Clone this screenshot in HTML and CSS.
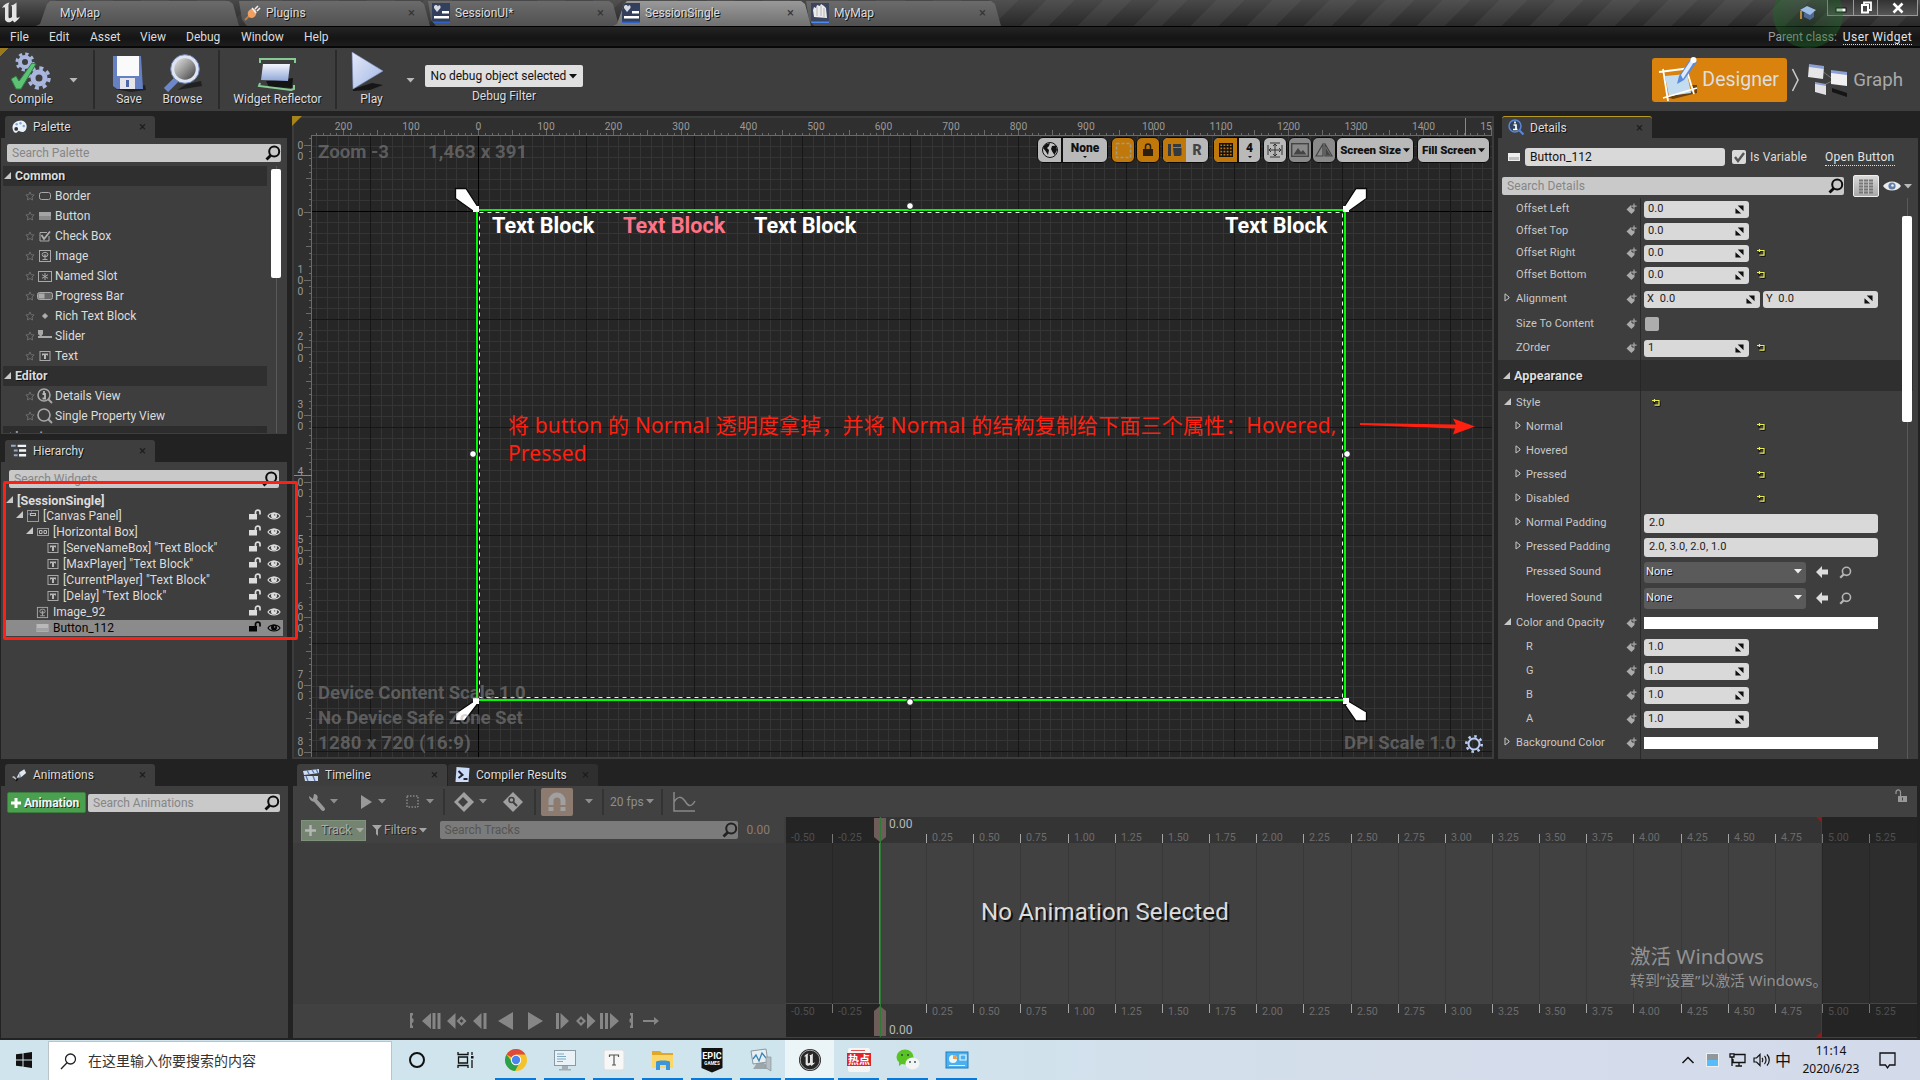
FILE: index.html
```html
<!DOCTYPE html>
<html lang="zh-CN">
<head>
<meta charset="utf-8">
<title>SessionSingle</title>
<link rel="stylesheet" href="styles.css">
</head>
<body>
<svg class="defs" width="0" height="0">
  <defs>
    <linearGradient id="g-blue" x1="0" y1="0" x2="0" y2="1"><stop offset="0" stop-color="#f2f5fc"/><stop offset="1" stop-color="#8fa6d8"/></linearGradient>
    <linearGradient id="g-lens" x1="0" y1="0" x2="1" y2="1"><stop offset="0" stop-color="#f4f4f4"/><stop offset=".55" stop-color="#8c8c8c"/><stop offset="1" stop-color="#2c2c2c"/></linearGradient>
    <linearGradient id="g-play" x1="0" y1="0" x2="1" y2="1"><stop offset="0" stop-color="#e6e9f8"/><stop offset="1" stop-color="#9fb6e6"/></linearGradient>
  </defs>
  <symbol id="search" viewBox="0 0 16 16"><circle cx="9.2" cy="6.6" r="5" fill="none" stroke="currentColor" stroke-width="2"/><path d="M5.6 10.4 1.5 14.5" stroke="currentColor" stroke-width="2.8"/></symbol>
  <symbol id="star" viewBox="0 0 10 10"><path d="M5 .9 6.2 3.7 9.2 4 7 6 7.6 9 5 7.5 2.4 9 3 6 .8 4 3.8 3.7Z" fill="none" stroke="#6c6c6c"/></symbol>
  <symbol id="open" viewBox="0 0 8 8"><path d="M8 0V8H0Z" fill="#c8c8c8"/></symbol>
  <symbol id="closed" viewBox="0 0 6 9"><path d="M1 .8V8L5 5V4Z" fill="none" stroke="#c8c8c8"/></symbol>
  <symbol id="down" viewBox="0 0 8 5"><path d="M0 0H8L4 4.6Z" fill="currentColor"/></symbol>
  <symbol id="spin" viewBox="0 0 10 10"><path d="M3 .5H9.500V7ZM.5 3.500V9.500H7Z" fill="#111"/><path d="M.5 1.200 9.300 9.500" stroke="#d9d9d9" stroke-width="2"/></symbol>
  <symbol id="reset" viewBox="0 0 9 8"><path d="M3 1 .8 3 3 5M1 3H3M2 1.5H7.5V6.5H3V5" fill="none" stroke="#111" transform="translate(.6 .8)"/><path d="M2.5 0V3M0 1.5H7V6.2H2.5" fill="none" stroke="#e8ec4c" stroke-width="1.2"/></symbol>
  <symbol id="tag" viewBox="0 0 12 12"><path d="M.5 6.5 5 2 8.5 6.2V8L5.4 11Z" fill="#aaa"/><path d="M8 .5V6M5.3 3.2H10.8" stroke="#3e3e3e" stroke-width="3"/><path d="M8 .6V5.8M5.4 3.2H10.6" stroke="#a5a5a5" stroke-width="1.2"/></symbol>
  <symbol id="ic-text" viewBox="0 0 12 12"><rect x="1" y="1.5" width="10" height="9" fill="none" stroke="#a8a8a8"/><path d="M3 3.5H9V5.6H8L7.6 5H7V9H5V5H4.4L4 5.6H3Z" fill="#b8b8b8"/></symbol>
  <symbol id="ic-image" viewBox="0 0 14 14"><rect x="1.5" y="1.5" width="11" height="11" fill="none" stroke="#a8a8a8"/><ellipse cx="7" cy="5.6" rx="2.9" ry="2.2" fill="none" stroke="#a8a8a8"/><path d="M7 5V10.5M4.5 10.5H9.5M5.6 6.3 7 7.5 8.4 6.3" stroke="#a8a8a8" fill="none"/></symbol>
  <symbol id="ic-button" viewBox="0 0 14 10"><path d="M1 1H13V5H1Z" fill="#a4a4a4"/><path d="M1 5H13V9H1Z" fill="#8a8a8a"/></symbol>
  <symbol id="unlock" viewBox="0 0 12 11"><path d="M0 5H8V10.5H0Z" fill="currentColor"/><path d="M6.5 5V3C6.5 .5 11 .5 11 3V5.5" fill="none" stroke="currentColor" stroke-width="1.7"/></symbol>
  <symbol id="eye" viewBox="0 0 14 10"><path d="M1 5C3.5 1 10.500 1 13 5 10.500 9 3.5 9 1 5Z" fill="none" stroke="currentColor" stroke-width="1.2"/><circle cx="7" cy="4.6" r="3" fill="currentColor"/><circle cx="7.6" cy="3.9" r=".8" fill="#777"/></symbol>
  <symbol id="widget" viewBox="0 0 18 20"><rect width="18" height="20" fill="#32405e"/><rect y="18.5" width="18" height="1.500" fill="#2f62c9"/><path d="M6 3.500C4.500 1 1.500 2 2 5L5 9 8.500 5C9 2 7 1.500 6 3.500Z" fill="#d9dbe2"/><path d="M10 8H17V10.500H10ZM2 13H17V15.500H2Z" fill="#fff"/></symbol>
  <symbol id="ue" viewBox="0 0 22 24"><path d="M1 7C3 3 6 2 8.500 1.500 7 3.500 7.500 5 7.500 6V16C7.500 17.500 9.500 17.500 11 16V5.500L10 4.500C12 4 14 3 15.500 1.500V15.500C15.500 17.500 17 17 19 15.500 17.500 19 15 20 13.500 21.500L11.500 19.500C9.500 21.500 7.500 22 5.500 20.500 3.500 19 4 18 4 16V7.500C4 5.500 2.500 6 1 7Z" fill="#e4e4e4"/></symbol>
</svg>

<header class="titlebar">
  <div class="ue-logo"><svg width="24" height="24"><use href="#ue"/></svg></div>
  <div class="wtab first"><span>MyMap</span></div>
  <div class="wtab"><svg width="18" height="18" viewBox="0 0 18 18"><path d="M2 16 6 12" stroke="#c77c3a" stroke-width="2"/><path d="M5 8C7 4 11 4 13 6 14 9 13 13 9 14 6 14 4 12 5 8Z" fill="#f0a060"/><path d="M9 4 13 9M12 5 15 2M14 7 17 4" stroke="#eee" stroke-width="1.600"/></svg><span>Plugins</span><i>×</i></div>
  <div class="wtab"><svg width="18" height="20"><use href="#widget"/></svg><span>SessionUI*</span><i>×</i></div>
  <div class="wtab active"><svg width="18" height="20"><use href="#widget"/></svg><span>SessionSingle</span><i>×</i></div>
  <div class="wtab"><svg width="18" height="20" viewBox="0 0 18 20"><rect width="18" height="20" fill="#3a4560"/><rect y="18.500" width="18" height="1.500" fill="#4d87f0"/><path d="M2 7 3 4 5 5 6 2 9 3 10 1 13 3 15 5 16 15 3 14Z" fill="#ebebeb"/><path d="M6 4V13M10 3V13M13 5V14" stroke="#b5b5b5"/></svg><span>MyMap</span><i>×</i></div>
  <div class="tutorial"><svg width="18" height="18" viewBox="0 0 18 18"><path d="M5 8V12L11 15 15 12V7Z" fill="#4e6a94"/><path d="M1 5 8 1 17 5 11 10Z" fill="#9dbde8"/><path d="M2 6V14" stroke="#e0a34a" stroke-width="1.500"/></svg></div>
  <div class="winbtns">
    <b><svg width="12" height="10"><rect x="1" y="5" width="10" height="4" fill="#fff" stroke="#111"/></svg></b>
    <b><svg width="14" height="14" viewBox="0 0 14 14"><path d="M5 3V1.500H12V9H10" fill="none" stroke="#fff" stroke-width="1.800"/><rect x="3" y="4" width="6" height="7.500" fill="none" stroke="#fff" stroke-width="2"/></svg></b>
    <b><svg width="12" height="12" viewBox="0 0 12 12"><path d="M1.500 1.500 10.500 10.500M10.500 1.500 1.500 10.500" stroke="#fff" stroke-width="2.600"/></svg></b>
  </div>
</header>

<nav class="menubar">
  <span class="m-file">File</span><span class="m-edit">Edit</span><span class="m-asset">Asset</span><span class="m-view">View</span><span class="m-debug">Debug</span><span class="m-window">Window</span><span class="m-help">Help</span>
  <div class="parent">Parent class: <u>User Widget</u></div>
</nav>

<section class="toolbar">
  <div class="tool compile"><svg width="40" height="40" viewBox="0 0 40 40"><g fill="none" stroke="#a9b6de"><circle cx="14" cy="10" r="5" stroke-width="4"/><circle cx="14" cy="10" r="8" stroke-width="3" stroke-dasharray="3.200 3.080"/><circle cx="28" cy="26" r="6" stroke-width="5"/><circle cx="28" cy="26" r="10" stroke-width="3.500" stroke-dasharray="4 3.850"/></g><path d="M0 27 5 24 8 29 21 11 25 12 10 37 5 37Z" fill="#5dc274" stroke="#2f7a43"/></svg><span>Compile</span></div>
  <svg class="arrow a1" width="9" height="5"><use href="#down"/></svg>
  <div class="tool save"><svg width="36" height="38" viewBox="0 0 36 38"><path d="M4 35 34 31 35 36 20 38Z" fill="#151515" opacity=".7"/><path d="M2 2H30L32 35H6L2 32Z" fill="#6680c4"/><path d="M6 2H28V22H6Z" fill="#fafafa"/><path d="M9 24H24V35H9Z" fill="#e5e5ea"/><path d="M15 26H18V33H15Z" fill="#4e68a8"/></svg><span>Save</span></div>
  <div class="tool browse"><svg width="40" height="38" viewBox="0 0 40 38"><path d="M24 30 38 27 39 32 14 36Z" fill="#151515" opacity=".7"/><path d="M14 25 3 36" stroke="#6c88c8" stroke-width="6"/><circle cx="22" cy="15" r="12.500" fill="url(#g-lens)" stroke="#dfe4f2" stroke-width="3.500"/><circle cx="22" cy="15" r="14.300" fill="none" stroke="#7088bd"/></svg><span>Browse</span></div>
  <div class="tool reflector"><svg width="42" height="36" viewBox="0 0 42 36"><path d="M9 25 36 22 35 32 12 31Z" fill="#141414"/><path d="M3 7V3H38V7M3 27 2 30 34 34 37 33V29" fill="none" stroke="#86cb94" stroke-width="2"/><path d="M6 8H33L31 25 4 24Z" fill="url(#g-blue)"/></svg><span>Widget Reflector</span></div>
  <div class="tool play"><svg width="36" height="40" viewBox="0 0 36 40"><path d="M3 37 22 31 33 33 20 38 3 39Z" fill="#161616"/><path d="M2 0 33 19 3 37Z" fill="url(#g-play)" stroke="#7c8fc0" stroke-width=".6"/></svg><span>Play</span></div>
  <svg class="arrow a2" width="9" height="5"><use href="#down"/></svg>
  <div class="filter"><div class="combo">No debug object selected<svg width="8" height="5"><use href="#down"/></svg></div><span>Debug Filter</span></div>
  <div class="modes">
    <div class="designer"><svg width="42" height="50" viewBox="0 0 42 50"><path d="M10 42 38 36 34 30 40 30 40 38 16 44Z" fill="#6b420b"/><path d="M8 21 30 19 34 38 12 41Z" fill="#c4dcf0"/><path d="M2 17 34 13M6 14 11 46M6 43 40 33M29 13 37 39" stroke="#fff" stroke-width="1.800"/><path d="M20 29 22 21 34 3 40 7 27 25Z" fill="#5b8bdb"/><path d="M24 20 34 5 37 7 26 24Z" fill="#dfe9fa"/><circle cx="36.500" cy="5" r="3" fill="#fff"/></svg><span>Designer</span></div>
    <svg class="chev" width="9" height="24" viewBox="0 0 9 24"><path d="M1.500 1 7 12 1.500 23" fill="none" stroke="#c9c9c9" stroke-width="1.600"/></svg>
    <svg width="40" height="36" viewBox="0 0 40 36"><path d="M24 26 39 31 39 35 24 30Z" fill="#151515"/><path d="M14 9 26 18 14 24" stroke="#777" fill="none"/><path d="M1 3 16 5 15 17 0 15Z" fill="#e6e6e8"/><path d="M1 2 16 4V7L1 5Z" fill="#8ba1d4"/><path d="M23 9 39 11V24L23 22Z" fill="#f1f1f1"/><path d="M23 8 39 10V13L23 11Z" fill="#8ba1d4"/><path d="M7 21 18 23V33L7 30Z" fill="#e0e0e3"/><path d="M7 20 18 22V24L7 22Z" fill="#8ba1d4"/></svg>
    <span class="graph">Graph</span>
  </div>
</section>

<main class="work">
  <aside class="left">
    <div class="tab"><svg width="18" height="16" viewBox="0 0 18 16"><path d="M2 11C0 4 6 1 11 1 17 2 18 8 15 12 12 15 9 12 8 12 6 15 3 15 2 11Z" fill="#e9f2fb"/><circle cx="5.500" cy="10" r="2" fill="#333"/><circle cx="6" cy="5" r="1.300" fill="#7fa8d9"/><circle cx="10" cy="4" r="1.300" fill="#7fa8d9"/><circle cx="13.500" cy="7" r="1.300" fill="#7fa8d9"/></svg><span>Palette</span><i>×</i></div>
    <div class="panel palette">
      <div class="search"><span>Search Palette</span><svg width="16" height="16"><use href="#search"/></svg></div>
      <div class="plist">
        <div class="rows">
          <h4><svg width="7" height="7"><use href="#open"/></svg>Common</h4>
          <p><svg width="10" height="10"><use href="#star"/></svg><svg width="16" height="16" viewBox="0 0 16 16"><rect x="2.500" y="4.500" width="11" height="7" rx="2" fill="none" stroke="#a8a8a8"/></svg>Border</p>
          <p><svg width="10" height="10"><use href="#star"/></svg><svg width="16" height="16" viewBox="-1 -3 16 16"><use href="#ic-button" width="14" height="10"/></svg>Button</p>
          <p><svg width="10" height="10"><use href="#star"/></svg><svg width="16" height="16" viewBox="0 0 16 16"><path d="M10 4.500H3V13H12V8" fill="none" stroke="#a8a8a8"/><path d="M4.500 7 7 11 13 3.500" fill="none" stroke="#b0b0b0" stroke-width="1.800"/></svg>Check Box</p>
          <p><svg width="10" height="10"><use href="#star"/></svg><svg width="16" height="16" viewBox="-1 -1 16 16"><use href="#ic-image" width="14" height="14"/></svg>Image</p>
          <p><svg width="10" height="10"><use href="#star"/></svg><svg width="16" height="16" viewBox="0 0 16 16"><rect x="1.500" y="3.500" width="13" height="10" fill="none" stroke="#a8a8a8"/><path d="M8 5V12M5 6.700 11 10.300M11 6.700 5 10.300" stroke="#a8a8a8"/></svg>Named Slot</p>
          <p><svg width="10" height="10"><use href="#star"/></svg><svg width="16" height="16" viewBox="0 0 16 16"><rect x=".5" y="4.500" width="15" height="7" rx="2" fill="#666" stroke="#a8a8a8"/><rect x="1.500" y="5.500" width="6" height="5" fill="#aaa"/></svg>Progress Bar</p>
          <p><svg width="10" height="10"><use href="#star"/></svg><svg width="16" height="16" viewBox="0 0 16 16"><path d="M8 5.500 10.500 8 8 10.500 5.500 8Z" fill="#b0b0b0" stroke="#b0b0b0" stroke-linejoin="round"/></svg>Rich Text Block</p>
          <p><svg width="10" height="10"><use href="#star"/></svg><svg width="16" height="16" viewBox="0 0 16 16"><path d="M1 2H6V6L4.500 8H15V10H1V8H3L1 6Z" fill="#a8a8a8"/></svg>Slider</p>
          <p><svg width="10" height="10"><use href="#star"/></svg><svg width="16" height="16" viewBox="-2 -2 16 16"><use href="#ic-text" width="12" height="12"/></svg>Text</p>
          <h4><svg width="7" height="7"><use href="#open"/></svg>Editor</h4>
          <p><svg width="10" height="10"><use href="#star"/></svg><svg width="16" height="16" viewBox="0 0 16 16"><circle cx="7" cy="7" r="6" fill="none" stroke="#a8a8a8" stroke-width="1.600"/><path d="M11 11 15 15" stroke="#a8a8a8" stroke-width="2"/><path d="M5.500 6H8V10.500M5.500 10.500H9M7 3V5" stroke="#b8b8b8" stroke-width="1.800" fill="none"/></svg>Details View</p>
          <p><svg width="10" height="10"><use href="#star"/></svg><svg width="16" height="16" viewBox="0 0 16 16"><circle cx="7" cy="7" r="6" fill="none" stroke="#a8a8a8" stroke-width="1.600"/><path d="M11 11 15 15" stroke="#a8a8a8" stroke-width="2"/></svg>Single Property View</p>
          <h4 class="cut"><svg width="7" height="7"><use href="#open"/></svg>Input</h4>
        </div>
        <div class="track"><div class="thumb"></div></div>
      </div>
    </div>
    <div class="tab"><svg width="18" height="14" viewBox="0 0 18 14"><path d="M0 1.500H5M3 6.500H7M3 11.500H7" stroke="#9aaac8" stroke-width="2"/><path d="M7 1.500H16M8.500 6.500H16M8.500 11.500H16" stroke="#f0f3f8" stroke-width="2.500"/></svg><span>Hierarchy</span><i>×</i></div>
    <div class="panel hierarchy">
      <div class="search"><span>Search Widgets</span><svg width="16" height="16"><use href="#search"/></svg></div>
      <div class="tree">
        <div class="n n0"><svg class="tw" width="7" height="7"><use href="#open"/></svg><b>[SessionSingle]</b></div>
        <div class="n n1"><svg class="tw" width="7" height="7"><use href="#open"/></svg><svg width="12" height="12" viewBox="0 0 12 12"><rect x=".5" y=".5" width="11" height="11" fill="none" stroke="#999"/><path d="M1 4H3M4.500 1V2.500" stroke="#3f8fe0"/><rect x="3.500" y="3.500" width="5" height="2" fill="none" stroke="#bbb"/></svg><span>[Canvas Panel]</span><svg class="lk" width="12" height="11"><use href="#unlock"/></svg><svg class="ey" width="14" height="10"><use href="#eye"/></svg></div>
        <div class="n n2"><svg class="tw" width="7" height="7"><use href="#open"/></svg><svg width="12" height="12" viewBox="0 0 12 12"><rect x=".5" y="2.500" width="11" height="7" fill="none" stroke="#999"/><path d="M2.500 4.500H5V7.500H2.500ZM7 4.500H9.500V7.500H7Z" fill="none" stroke="#bbb"/></svg><span>[Horizontal Box]</span><svg class="lk" width="12" height="11"><use href="#unlock"/></svg><svg class="ey" width="14" height="10"><use href="#eye"/></svg></div>
        <div class="n n3"><svg width="12" height="12"><use href="#ic-text"/></svg><span>[ServeNameBox] "Text Block"</span><svg class="lk" width="12" height="11"><use href="#unlock"/></svg><svg class="ey" width="14" height="10"><use href="#eye"/></svg></div>
        <div class="n n3"><svg width="12" height="12"><use href="#ic-text"/></svg><span class="sp">[MaxPlayer] "Text Block"</span><svg class="lk" width="12" height="11"><use href="#unlock"/></svg><svg class="ey" width="14" height="10"><use href="#eye"/></svg></div>
        <div class="n n3"><svg width="12" height="12"><use href="#ic-text"/></svg><span class="sp">[CurrentPlayer] "Text Block"</span><svg class="lk" width="12" height="11"><use href="#unlock"/></svg><svg class="ey" width="14" height="10"><use href="#eye"/></svg></div>
        <div class="n n3"><svg width="12" height="12"><use href="#ic-text"/></svg><span class="sp">[Delay] "Text Block"</span><svg class="lk" width="12" height="11"><use href="#unlock"/></svg><svg class="ey" width="14" height="10"><use href="#eye"/></svg></div>
        <div class="n n4"><svg width="13" height="13"><use href="#ic-image"/></svg><span>Image_92</span><svg class="lk" width="12" height="11"><use href="#unlock"/></svg><svg class="ey" width="14" height="10"><use href="#eye"/></svg></div>
        <div class="n n4 sel"><svg width="13" height="10" viewBox="0 0 13 10"><rect x=".5" y="1" width="12" height="8" fill="#b9b9b9"/><path d="M1 5H12V8.500H1Z" fill="#a2a2a2"/></svg><span>Button_112</span><svg class="lk" width="12" height="11"><use href="#unlock"/></svg><svg class="ey" width="14" height="10"><use href="#eye"/></svg></div>
      </div>
    </div>
  </aside>

  <section class="viewport">
    <svg id="canvas" width="1202" height="643" viewBox="292 116 1202 643"></svg>
    <span class="hud zoom">Zoom -3</span><span class="hud pos">1,463 x 391</span>
    <div class="hud info"><div>Device Content Scale 1.0</div><div>No Device Safe Zone Set</div><div>1280 x 720 (16:9)</div></div>
    <div class="hud dpi">DPI Scale 1.0<svg width="18" height="20" viewBox="0 0 18 20"><circle cx="9" cy="10" r="5.500" fill="none" stroke="#b9cdf3" stroke-width="2"/><circle cx="9" cy="10" r="7.700" fill="none" stroke="#b9cdf3" stroke-width="2.600" stroke-dasharray="2.500 3.548"/></svg></div>
    <div class="chips">
      <div class="chip"><b class="w24"><svg width="18" height="18" viewBox="0 0 18 18"><circle cx="9" cy="9" r="7.500" fill="#c4c4c4" stroke="#111"/><path d="M4 3.500 9 2 8 5 6 7 8 9 7 14 4.500 10 2 7ZM11 5 15 4.500 16 9 13.500 14 11.500 11 10 8Z" fill="#111"/></svg></b><b class="w45 none">None<em></em></b></div>
      <div class="chip or m3"><b class="w23"><svg width="17" height="17"><rect x="1.500" y="1.500" width="14" height="14" fill="none" stroke="#9d9d8d" stroke-width="1.500" stroke-dasharray="3 2"/></svg></b></div>
      <div class="chip or m1"><b class="w23"><svg width="12" height="14" viewBox="0 0 12 14"><path d="M1 6H11V13H1Z" fill="#2b2010"/><path d="M3.500 6V3.500C3.500 0 8.500 0 8.500 3.500V6" fill="none" stroke="#2b2010" stroke-width="1.500"/></svg></b></div>
      <div class="chip m2"><b class="w24 or"><svg width="16" height="14" viewBox="0 0 16 14"><path d="M1 1H4V13H1ZM6 1 14 1V4H6ZM6 5H14.500V12L13 13H7Z" fill="#333a40"/></svg></b><b class="w23 r">R</b></div>
      <div class="chip m4"><b class="w24 or"><svg width="14" height="14" viewBox="0 0 14 14"><path d="M.7.7H13.300V13.300H.7ZM.7 3.800H13.300M.7 7H13.300M.7 10.200H13.300M3.800.7V13.300M7 .7V13.300M10.200.7V13.300" fill="none" stroke="#111" stroke-width="1.400"/></svg></b><b class="w24 none">4<em></em></b></div>
      <div class="chip m2"><b class="w23"><svg width="18" height="18" viewBox="0 0 18 18"><path d="M2 4V14M16 4V14M4 2H14M4 16H14M9 3V15M3 9H15M7 5 9 3 11 5M7 13 9 15 11 13M5 7 3 9 5 11M13 7 15 9 13 11" fill="none" stroke="#333"/></svg></b></div>
      <div class="chip m1 dim"><b class="w23"><svg width="18" height="14" viewBox="0 0 18 14"><rect x=".7" y=".7" width="16.600" height="12.600" fill="none" stroke="#444" stroke-width="1.400"/><path d="M2.500 11.500 7 5 10 9 12 7 15.500 11.500Z" fill="#444"/></svg></b></div>
      <div class="chip dim"><b class="w23"><svg width="18" height="14" viewBox="0 0 18 14"><path d="M8 1V13H1ZM10 1V13H17Z" fill="none" stroke="#444" stroke-width="1.200"/><path d="M11 5V12.500H15.500Z" fill="#444"/></svg></b></div>
      <div class="chip"><b class="w79">Screen Size<svg width="7" height="5"><use href="#down"/></svg></b></div>
      <div class="chip m3"><b class="w73">Fill Screen<svg width="7" height="5"><use href="#down"/></svg></b></div>
    </div>
    <span class="tb t1">Text Block</span><span class="tb t2">Text Block</span><span class="tb t3">Text Block</span><span class="tb t4">Text Block</span>
  </section>

  <aside class="right">
    <div class="tab dtab"><svg width="17" height="17" viewBox="0 0 17 17"><circle cx="7" cy="7" r="6" fill="#31435c" stroke="#5c86d6" stroke-width="1.500"/><path d="M11.500 11.500 15.500 15.500" stroke="#5c86d6" stroke-width="2.200"/><path d="M5.500 6H8V10.500M5 10.500H9.500M7 2.500V4.500" stroke="#fff" stroke-width="1.700" fill="none"/></svg><span>Details</span><i>×</i></div>
    <div class="panel details">
      <div class="name"><svg width="12" height="8"><rect width="12" height="8" fill="#efefef"/><rect x="1" y="4" width="10" height="3" fill="#c2c2c2"/></svg><div class="field">Button_112</div><div class="cb"><svg width="12" height="12" viewBox="0 0 12 12"><path d="M2 6 5 10 11 2" fill="none" stroke="#555" stroke-width="2.400"/></svg></div><span>Is Variable</span><u>Open Button</u></div>
      <div class="dsearch"><div class="search"><span>Search Details</span><svg width="16" height="16"><use href="#search"/></svg></div><div class="gridbtn"><svg width="14" height="15" viewBox="0 0 14 15"><path d="M0 1.500H14M0 4.500H14M0 7.500H14M0 10.500H14M0 13.500H14" stroke="#777" stroke-width="2"/><path d="M4.500 0V15M9.500 0V15" stroke="#c4c4c4"/></svg></div><svg class="eyeb" width="18" height="12" viewBox="0 0 18 12"><path d="M0 6C4 0 14 0 18 6 14 12 4 12 0 6Z" fill="#ececec"/><circle cx="9" cy="6" r="3.600" fill="#5f7ea8"/><circle cx="9.500" cy="5.500" r="1.300" fill="#eee"/></svg><svg class="arrow" width="8" height="5"><use href="#down"/></svg></div>
      <div class="props">
        <div class="list">
          <div class="row h22"><label>Offset Left<svg width="12" height="12"><use href="#tag"/></svg></label><div class="num">0.0<svg width="9" height="9"><use href="#spin"/></svg></div></div>
          <div class="row h22"><label>Offset Top<svg width="12" height="12"><use href="#tag"/></svg></label><div class="num">0.0<svg width="9" height="9"><use href="#spin"/></svg></div></div>
          <div class="row h22"><label>Offset Right<svg width="12" height="12"><use href="#tag"/></svg></label><div class="num">0.0<svg width="9" height="9"><use href="#spin"/></svg></div><svg class="rs" width="9" height="8"><use href="#reset"/></svg></div>
          <div class="row h22"><label>Offset Bottom<svg width="12" height="12"><use href="#tag"/></svg></label><div class="num">0.0<svg width="9" height="9"><use href="#spin"/></svg></div><svg class="rs" width="9" height="8"><use href="#reset"/></svg></div>
          <div class="row h26"><label><svg class="x1" width="6" height="9"><use href="#closed"/></svg>Alignment<svg width="12" height="12"><use href="#tag"/></svg></label><div class="num xy">X&nbsp; 0.0<svg width="9" height="9"><use href="#spin"/></svg></div><div class="num xy y">Y&nbsp; 0.0<svg width="9" height="9"><use href="#spin"/></svg></div></div>
          <div class="row h24"><label>Size To Content<svg width="12" height="12"><use href="#tag"/></svg></label><div class="cb off"></div></div>
          <div class="row h24"><label>ZOrder<svg width="12" height="12"><use href="#tag"/></svg></label><div class="num">1<svg width="9" height="9"><use href="#spin"/></svg></div><svg class="rs" width="9" height="8"><use href="#reset"/></svg></div>
          <div class="row cat"><label><svg class="x0" width="7" height="7"><use href="#open"/></svg>Appearance</label></div>
          <div class="row h24"><label><svg class="x1" width="7" height="7"><use href="#open"/></svg>Style</label><svg class="rs near" width="9" height="8"><use href="#reset"/></svg></div>
          <div class="row h24"><label class="in"><svg class="x2" width="6" height="9"><use href="#closed"/></svg>Normal</label><svg class="rs far" width="9" height="8"><use href="#reset"/></svg></div>
          <div class="row h24"><label class="in"><svg class="x2" width="6" height="9"><use href="#closed"/></svg>Hovered</label><svg class="rs far" width="9" height="8"><use href="#reset"/></svg></div>
          <div class="row h24"><label class="in"><svg class="x2" width="6" height="9"><use href="#closed"/></svg>Pressed</label><svg class="rs far" width="9" height="8"><use href="#reset"/></svg></div>
          <div class="row h24"><label class="in"><svg class="x2" width="6" height="9"><use href="#closed"/></svg>Disabled</label><svg class="rs far" width="9" height="8"><use href="#reset"/></svg></div>
          <div class="row h24"><label class="in"><svg class="x2" width="6" height="9"><use href="#closed"/></svg>Normal Padding</label><div class="num wide">2.0</div></div>
          <div class="row h24"><label class="in"><svg class="x2" width="6" height="9"><use href="#closed"/></svg>Pressed Padding</label><div class="num wide">2.0, 3.0, 2.0, 1.0</div></div>
          <div class="row h26"><label class="in">Pressed Sound</label><div class="drop">None<svg width="8" height="5"><use href="#down"/></svg></div><svg class="back" width="12" height="12" viewBox="0 0 12 12"><path d="M0 6 6 0V3.500H12V8.500H6V12Z" fill="#dcdcdc"/></svg><svg class="find" width="13" height="13"><use href="#search"/></svg></div>
          <div class="row h26"><label class="in">Hovered Sound</label><div class="drop">None<svg width="8" height="5"><use href="#down"/></svg></div><svg class="back" width="12" height="12" viewBox="0 0 12 12"><path d="M0 6 6 0V3.500H12V8.500H6V12Z" fill="#dcdcdc"/></svg><svg class="find" width="13" height="13"><use href="#search"/></svg></div>
          <div class="row h24"><label><svg class="x1" width="7" height="7"><use href="#open"/></svg>Color and Opacity<svg width="12" height="12"><use href="#tag"/></svg></label><div class="swatch"></div></div>
          <div class="row h24"><label class="in">R<svg width="12" height="12"><use href="#tag"/></svg></label><div class="num">1.0<svg width="9" height="9"><use href="#spin"/></svg></div></div>
          <div class="row h24"><label class="in">G<svg width="12" height="12"><use href="#tag"/></svg></label><div class="num">1.0<svg width="9" height="9"><use href="#spin"/></svg></div></div>
          <div class="row h24"><label class="in">B<svg width="12" height="12"><use href="#tag"/></svg></label><div class="num">1.0<svg width="9" height="9"><use href="#spin"/></svg></div></div>
          <div class="row h24"><label class="in">A<svg width="12" height="12"><use href="#tag"/></svg></label><div class="num">1.0<svg width="9" height="9"><use href="#spin"/></svg></div></div>
          <div class="row h24"><label><svg class="x1" width="6" height="9"><use href="#closed"/></svg>Background Color<svg width="12" height="12"><use href="#tag"/></svg></label><div class="swatch"></div></div>
        </div>
        <div class="track dtrack"><div class="thumb"></div></div>
      </div>
    </div>
  </aside>
</main>

<section class="bottom">
  <div class="anim">
    <div class="tab"><svg width="18" height="16" viewBox="0 0 18 16"><path d="M2 11 6 15 8 12Z" fill="#111"/><path d="M1 10 3 9 6 12 5 13Z" fill="#bbb"/><path d="M6 11 9 5 14 2 16 6 11 10Z" fill="#dfe8f2"/><path d="M9 5 11 10 8 11Z" fill="#8ea4b8"/></svg><span>Animations</span><i>×</i></div>
    <div class="panel"><div class="addanim"><svg width="10" height="10" viewBox="0 0 10 10"><path d="M5 0V10M0 5H10" stroke="#fff" stroke-width="3"/></svg>Animation</div><div class="search"><span>Search Animations</span><svg width="16" height="16"><use href="#search"/></svg></div></div>
  </div>
  <div class="timeline">
    <div class="tabs">
      <div class="tab"><svg width="17" height="14" viewBox="0 0 17 14"><path d="M0 3 16 1V5L1 7ZM1 8H15V13H2Z" fill="#cfdcf0"/><path d="M4 2 6 6M9 2 11 5M13 1 15 5M3 8 5 13M10 8 12 13" stroke="#5a76ad" stroke-width="1.300"/></svg><span>Timeline</span><i>×</i></div>
      <div class="tab off"><svg width="16" height="16" viewBox="0 0 16 16"><path d="M2 0 15 1 14 15 1 15Z" fill="#cbdcf8"/><path d="M4 4 8 8 4 11M9 12H13" fill="none" stroke="#223" stroke-width="2"/></svg><span>Compiler Results</span><i>×</i></div>
    </div>
    <div class="tbody">
      <div class="ttools">
        <svg class="i1" width="20" height="20" viewBox="0 0 20 20"><path d="M8 8 16 17" stroke="#999" stroke-width="4" stroke-linecap="round"/><path d="M2 4 6 7 7 2C11 2 12 6 9 9 6 11 2 8 2 4Z" fill="#999"/></svg><svg class="i2" width="8" height="5"><use href="#down"/></svg>
        <svg class="i3" width="12" height="14"><path d="M1 0 12 7 1 14Z" fill="#999"/></svg><svg class="i4" width="8" height="5"><use href="#down"/></svg>
        <svg class="i5" width="13" height="13"><rect x="1" y="1" width="11" height="11" fill="none" stroke="#aaa" stroke-dasharray="1.500 1.500"/></svg><svg class="i6" width="8" height="5"><use href="#down"/></svg>
        <s class="i7"></s>
        <svg class="i8" width="20" height="20" viewBox="0 0 20 20"><path d="M10 0 20 10 10 20 0 10Z" fill="#a0a0a0"/><path d="M9 5 14 10 9 15 4 10Z" fill="#404040"/></svg><svg class="i9" width="8" height="5"><use href="#down"/></svg>
        <svg class="i10" width="20" height="20" viewBox="0 0 20 20"><path d="M10 0 20 10 10 20 0 10Z" fill="#a0a0a0"/><circle cx="8.500" cy="8" r="2.500" fill="none" stroke="#404040" stroke-width="1.600"/><path d="M10 10 14 14" stroke="#404040" stroke-width="2"/></svg>
        <s class="i11"></s>
        <div class="magnet"><svg width="18" height="20" viewBox="0 0 18 20"><path d="M3 13V9C3 1 15 1 15 9V13" fill="none" stroke="#a0a0a0" stroke-width="5"/><path d="M.5 15H5.500V19H.5ZM12.500 15H17.500V19H12.500Z" fill="#a0a0a0"/></svg></div><svg class="i12" width="8" height="5"><use href="#down"/></svg>
        <s class="i13"></s><span class="fps">20 fps<svg width="8" height="5"><use href="#down"/></svg></span><s class="i14"></s>
        <svg class="i15" width="23" height="20" viewBox="0 0 23 20"><path d="M1 0V19H22M1 10C5 4 8 4 12 9 15 14 18 16 22 9" fill="none" stroke="#888" stroke-width="1.500"/></svg>
        <svg class="lock" width="13" height="13" viewBox="0 0 13 13"><path d="M3 7H12V13H3Z" fill="#999"/><path d="M1 5V3C1 .2 5.500.2 5.500 3V7" fill="none" stroke="#999" stroke-width="1.200"/><path d="M7.500 8.500V11.500" stroke="#444"/></svg>
      </div>
      <div class="tmain">
        <div class="outliner">
          <div class="otop"><div class="trk"><svg width="11" height="11" viewBox="0 0 10 10"><path d="M5 0V10M0 5H10" stroke="#b5b5b5" stroke-width="2.200"/></svg>Track<svg width="8" height="5"><use href="#down"/></svg></div><div class="flt"><svg width="10" height="11" viewBox="0 0 10 11"><path d="M0 0H10L6 4.500V11L4 9V4.500Z" fill="#a5a5a5"/></svg>Filters<svg width="8" height="5"><use href="#down"/></svg></div><div class="search dimmed"><span>Search Tracks</span><svg width="16" height="16"><use href="#search"/></svg></div><span class="zero">0.00</span></div>
          <div class="obot"><svg width="258" height="20" viewBox="408 1011 258 20" fill="#868686"><path d="M413 1013H416V1015L415 1016V1018L416.500 1019V1022L415 1023V1025L416 1026V1028H413ZM633 1013H636V1028H633V1026L634 1025V1023L632.500 1022V1019L634 1018V1016L633 1015Z"/><path d="M425 1021 434 1013V1029ZM435.500 1013H438.500V1029H435.500ZM440.500 1013H443.500V1029H440.500Z"/><path d="M450 1021 458.500 1013V1029ZM464.500 1016 469.500 1021 464.500 1026 459.500 1021ZM464.500 1019 462.500 1021 464.500 1023 466.500 1021Z" fill-rule="evenodd"/><path d="M476 1021 484.500 1013V1029ZM486.500 1013H489.500V1029H486.500Z"/><path d="M501 1021 516 1012V1030ZM531 1012 546 1021 531 1030Z"/><path d="M559 1013H562V1029H559ZM563.500 1013 572 1021 563.500 1029Z"/><path d="M584 1016 589 1021 584 1026 579 1021ZM584 1019 582 1021 584 1023 586 1021ZM590 1013 598.500 1021 590 1029Z" fill-rule="evenodd"/><path d="M603 1013H606V1029H603ZM608 1013H611V1029H608ZM613 1013 622 1021 613 1029Z"/><path d="M646 1020H657V1017L662 1021 657 1025V1022H646Z"/></svg></div>
        </div>
        <div class="trackarea">
          <svg id="tracks" width="1131" height="221" viewBox="786 817 1131 221"></svg>
          <span class="noanim">No Animation Selected</span>
          <div class="watermark"><div class="w1">激活 Windows</div><div class="w2">转到“设置”以激活 Windows。</div></div>
        </div>
      </div>
    </div>
  </div>
</section>

<footer class="taskbar">
  <div class="start"><svg width="16" height="16" viewBox="0 0 16 16"><path d="M0 2.300 6.500 1.400V7.500H0ZM7.500 1.300 16 0V7.500H7.500ZM0 8.500H6.500V14.600L0 13.700ZM7.500 8.500H16V16L7.500 14.700Z" fill="#111"/></svg></div>
  <div class="tsearch"><svg width="17" height="17" viewBox="0 0 17 17"><circle cx="10.500" cy="6" r="5" fill="none" stroke="#222" stroke-width="1.300"/><path d="M7 9.700 1 16" stroke="#222" stroke-width="1.300"/></svg><span>在这里输入你要搜索的内容</span></div>
  <div class="apps">
    <div class="app n"><svg width="18" height="18"><circle cx="9" cy="9" r="7" fill="none" stroke="#111" stroke-width="2"/></svg></div>
    <div class="app n"><svg width="18" height="18" viewBox="0 0 18 18"><path d="M1 1V3.500H11V1M1 17V14.500H11V17M1.500 6H10.500V12H1.500ZM15 1V4M15 9V17" fill="none" stroke="#111" stroke-width="1.300"/><rect x="14" y="5" width="2.500" height="2.500" fill="#111"/></svg></div>
    <div class="app"><svg width="24" height="24" viewBox="0 0 24 24"><circle cx="12" cy="12" r="11" fill="#f4c22b"/><path d="M12 12 2.500 6.500A11 11 0 0 1 21.500 6.500H12Z" fill="#dd4b3e"/><path d="M2.500 6.500A11 11 0 0 0 11 23L16 14 12 12 7.500 13Z" fill="#2ba14b"/><circle cx="12" cy="12" r="5.200" fill="#fff"/><circle cx="12" cy="12" r="4.200" fill="#4a86ee"/></svg></div>
    <div class="app"><svg width="24" height="24" viewBox="0 0 24 24"><rect x="1.500" y="2.500" width="21" height="15" fill="#e9f2f7" stroke="#8a99a3"/><path d="M4 6H11M4 8.500H13M4 11H13M4 13.500H10" stroke="#7da9c4"/><path d="M9 18H15V21H18V22.500H6V21H9Z" fill="#a4adb3"/></svg></div>
    <div class="app"><svg width="24" height="24" viewBox="0 0 24 24"><rect x="2" y="2" width="20" height="20" rx="2" fill="#f7f7f7" stroke="#ddd"/><path d="M7.500 9V7H16.500V9M12 7V17M10 17H14" fill="none" stroke="#555" stroke-width="1.200"/></svg></div>
    <div class="app"><svg width="24" height="24" viewBox="0 0 24 24"><path d="M1 3H9L11 5H22V20H1Z" fill="#e0a82a"/><path d="M1 7H22V20H1Z" fill="#fbd669"/><path d="M5 22V14C5 12 19 12 19 14V22H15V17H9V22Z" fill="#3b97dc"/></svg></div>
    <div class="app"><svg width="24" height="26" viewBox="0 0 24 26"><path d="M1.500 1H22.500V21L12 25.500 1.500 21Z" fill="#111"/><text x="12" y="12" class="epic">EPIC</text><text x="12" y="18" class="games">GAMES</text></svg></div>
    <div class="app"><svg width="24" height="24" viewBox="0 0 24 24"><path d="M8 15H15L20 19 18 21H4Z" fill="#9aa6ac"/><path d="M2 3 17 1 19 14 4 16Z" fill="#e6eef2" stroke="#8b979e"/><path d="M4 11 7 7 10 13 13 5 17 10" fill="none" stroke="#3382bb" stroke-width="1.300"/><path d="M17 9H22V23L17 20Z" fill="#b4bec3" stroke="#8b979e" stroke-width=".7"/></svg></div>
    <div class="app on"><svg width="24" height="24" viewBox="0 0 24 24"><circle cx="12" cy="12" r="11" fill="#262626"/><circle cx="12" cy="12" r="9.800" fill="none" stroke="#ddd" stroke-width=".7"/><use href="#ue" x="5" y="4.500" width="14" height="15"/></svg></div>
    <div class="app"><svg width="24" height="26" viewBox="0 0 24 26"><rect x="1" y="1" width="22" height="24" rx="2" fill="#f5f5f5"/><rect x="0" y="6" width="24" height="13" fill="#e32228"/><path d="M4 3.500H18" stroke="#d55"/><text x="12" y="16.500" class="hot">热点</text></svg></div>
    <div class="app"><svg width="24" height="24" viewBox="0 0 24 24"><ellipse cx="9" cy="9" rx="8.500" ry="7.500" fill="#58c322"/><path d="M3 14 3 18 7 15Z" fill="#58c322"/><ellipse cx="16.500" cy="15.500" rx="7" ry="6" fill="#f3f5f3"/><g fill="#345"><circle cx="6" cy="7" r="1"/><circle cx="12" cy="7" r="1"/><circle cx="14" cy="14" r=".9"/><circle cx="19" cy="14" r=".9"/></g></svg></div>
    <div class="app"><svg width="24" height="24" viewBox="0 0 24 24"><rect x="1" y="4" width="22" height="16" fill="#4cb0ee" stroke="#1d7ec0"/><circle cx="8" cy="11" r="4" fill="#e9f6ff"/><path d="M8 11V7A4 4 0 0 1 12 11Z" fill="#f2a23c"/><path d="M15 7H21V12H15ZM4 17.500H20" stroke="#e9f6ff" fill="none" stroke-width="1.200"/></svg></div>
  </div>
  <div class="tray">
    <svg width="14" height="8"><path d="M1.500 7 7 1.500 12.500 7" fill="none" stroke="#111" stroke-width="1.500"/></svg>
    <svg width="13" height="14"><rect x=".5" y=".5" width="12" height="13" fill="#55bdfc" stroke="#eee"/><rect x="1" y="1" width="11" height="6" fill="#8f979c"/></svg>
    <svg width="17" height="14" viewBox="0 0 17 14"><path d="M5 1.500H16V9.500H4V6M10 9.500V13M6.500 13H13M1 .8H5V4H1ZM3 4V13" fill="none" stroke="#111" stroke-width="1.300"/></svg>
    <svg width="18" height="14" viewBox="0 0 18 14"><path d="M1 5H3.500L7 1.500V12.500L3.500 9H1ZM9 5C10 6 10 8 9 9M11.500 3C13.500 5 13.500 9 11.500 11M14 1.500C17 4.500 17 9.500 14 12.500" fill="none" stroke="#111" stroke-width="1.200"/></svg>
    <span class="ime">中</span>
    <div class="clock"><div>11:14</div><div>2020/6/23</div></div>
    <svg width="17" height="17" viewBox="0 0 17 17"><path d="M1 1H16V13H10.500L8.500 15.800 6.500 13H1Z" fill="none" stroke="#111" stroke-width="1.300"/></svg>
  </div>
</footer>

<div class="note-box"></div>
<div class="note">将 button 的 Normal 透明度拿掉，并将 Normal 的结构复制给下面三个属性：Hovered, Pressed</div>
<svg class="note-arrow" width="116" height="20" viewBox="0 0 116 20"><path d="M0 7 96 8.500 93 2.500 115 10.500 93 18.500 95 12.500 0 9Z" fill="#ff2010"/></svg>
<script src="draw.js"></script>
</body>
</html>
```

FILE: styles.css
```css
*{box-sizing:border-box}
body{margin:0;width:1920px;height:1080px;overflow:hidden;display:flex;flex-direction:column;background:#222;color:#dcdcdc;font:12px/16px Roboto,"Noto Sans CJK SC",sans-serif;position:relative;cursor:default}
svg{display:block;flex:none}
.defs{position:absolute}
i{font-style:normal}

/* window tabs */
.titlebar{height:27px;flex:none;display:flex;position:relative;padding-left:36px;background:linear-gradient(rgba(90,90,90,.55),rgba(20,20,20,.35)),repeating-linear-gradient(135deg,#333 0 20px,#444 20px 40px);border-bottom:1px solid #000}
.ue-logo{position:absolute;left:0;top:0;width:48px;height:26px;background:linear-gradient(#555,#222);padding:1px 0 0}
.wtab{width:191px;height:25px;margin-top:1px;display:flex;align-items:center;position:relative;padding:0 0 1px 4px;background:linear-gradient(#6b6b6b,#515151);clip-path:polygon(0 0,calc(100% - 10px) 0,calc(100% - 6px) 12%,100% 100%,8px 100%,3px 75%);margin-right:-2px;text-shadow:1px 1px #111}
.wtab svg{margin-right:5px}
.wtab i{margin-left:auto;margin-right:15px;color:#333;text-shadow:none;font-size:13px}
.wtab.first{width:203px;padding-left:24px;margin-right:0}
.wtab.active{width:198px;background:linear-gradient(#999,#707070);padding-left:9px;margin-left:-4px;margin-right:-4px;z-index:1}
.wtab.active i{margin-right:17px}
.wtab.active+.wtab{width:195px;margin-left:-1px;padding-left:5px}
.wtab.active,.wtab.first{clip-path:polygon(0 100%,4px 92%,11px 12%,14px 0,calc(100% - 10px) 0,calc(100% - 6px) 12%,100% 100%)}
.tutorial{position:absolute;left:1773px;top:-20px;width:70px;height:68px;border-radius:50%;background:radial-gradient(rgba(20,90,30,.1),rgba(26,110,36,.55));padding:25px 0 0 26px;z-index:2}
.winbtns{position:absolute;right:2px;top:0;display:flex;border:1px solid #999;border-top:0}
.winbtns b{width:26px;height:15px;display:flex;align-items:center;justify-content:center;background:linear-gradient(#333,#555);border-right:1px solid #999}
.winbtns b:nth-child(2){width:24px}
.winbtns b:last-child{width:39px;border:0}

.menubar{height:21px;flex:none;display:flex;align-items:center;padding-left:10px;background:linear-gradient(#232323,#151515 60%,#1d1d1d);border-bottom:2px solid #080808}
.m-file{width:39px}.m-edit{width:41px}.m-asset{width:50px}.m-view{width:46px}.m-debug{width:55px}.m-window{width:63px}
.parent{margin-left:auto;margin-right:8px;color:#9b9b9b}
.parent u,.name u{text-decoration:none;color:#e4e4e4;border-bottom:1px dotted #ddd;margin-left:3px}
.parent u{letter-spacing:.4px}

/* main toolbar */
.toolbar{height:63px;flex:none;display:flex;align-items:flex-start;background:linear-gradient(135deg,#9a7a1c 6px,transparent 6px),#3e3e3e;position:relative;text-shadow:1px 1px #1a1a1a}
.tool{display:flex;flex-direction:column;align-items:center;height:59px;margin-top:2px;justify-content:flex-end}
.tool span{height:17px;white-space:nowrap}
.arrow{color:#b9b9b9}
.a1{margin:30px 0 0 7px}
.save{width:70px;margin-left:15px;border-left:2px solid #2b2b2b}
.browse{width:52px;margin-left:-4px;margin-right:7px;padding-right:5px}
.reflector{width:119px;border-left:2px solid #2b2b2b;border-right:2px solid #2b2b2b}
.play{width:69px}
.a2{margin:30px 0 0 0}
.compile span,.save span,.browse span,.play span,.reflector span{position:relative;top:-1px}
.toolbar .compile{width:62px;align-items:flex-start;padding-left:9px}
.compile svg{margin-left:2px}
.play svg{margin-right:8px}
.filter{margin:17px 0 0 10px;width:158px;text-align:center}
.combo{height:22px;background:#e0e0e0;color:#111;border-radius:2px;display:flex;align-items:center;justify-content:center;gap:3px;text-shadow:none;margin-bottom:1px}
.modes{margin:10px 17px 0 auto;display:flex;align-items:center;height:44px}
.designer{width:135px;height:44px;background:#d9820d;border-radius:3px;display:flex;align-items:center;font-size:19.500px;color:#dedede;padding-left:5px;text-shadow:none;gap:3px}
.chev{margin:0 8px 0 4px}
.graph{font-size:18.700px;color:#a9a9a9;margin-left:5px;text-shadow:none}

/* docked panels */
.work{height:648px;flex:none;padding:5px 2px 0 1px;display:flex}
.left{width:286px;margin-right:5px;display:flex;flex-direction:column}
.tab{width:150px;height:22px;margin-left:4px;background:#3e3e3e;border-radius:3px 3px 0 0;display:flex;align-items:center;padding:0 9px 0 6px;text-shadow:1px 1px #111;flex:none}
.tab span{margin-left:5px;margin-right:auto}
.tab>svg{width:17px}
.tab>i{color:#1b1b1b;text-shadow:none;font-size:13px}
.panel{background:#3e3e3e}
.palette{height:296px;padding:6px 6px 0;margin-bottom:6px;display:flex;flex-direction:column}
.search{height:18px;background:#c9c9c9;border-radius:2px;color:#868686;display:flex;align-items:center;padding:0 0 0 5px;flex:none}
.search svg{margin-left:auto;color:#0c0c0c}
.palette .search{width:274px}
.plist{display:flex;margin:4px 0 0 -4px;height:267px;overflow:hidden}
.rows{width:267px;overflow:hidden}
.rows h4{margin:0;height:20px;background:#2f2f2f;display:flex;align-items:center;gap:4px;padding-left:1px;font-weight:700;font-size:12.300px;text-shadow:1px 1px #111}
.rows h4 svg{margin-top:-2px}
.rows p{margin:0;height:20px;display:flex;align-items:center;padding-left:22px;white-space:nowrap}
.rows p svg:first-child{margin-right:2px}
.rows p svg:nth-child(2){margin-right:2px}
.rows .cut{opacity:.6;background:#222}
.track{width:10px;margin-left:4px;background:linear-gradient(90deg,transparent 5px,#5a5a5a 5px 6px,transparent 6px);padding-top:3px}
.thumb{width:10px;height:109px;background:#fff;border-radius:2px}
.hierarchy{height:297px;padding-top:8px}
.hierarchy .search{margin:0 8px}
.hierarchy .search svg{margin-right:1px}
.tree{padding:4px 4px 0 5px}
.n{height:16px;display:flex;align-items:center;position:relative;white-space:nowrap;padding-right:2px}
.tree .n0{padding-top:2px}
.n0 b{margin-left:4px;font-size:12.600px}
.n .tw{margin-top:-4px}
.n>span{margin-left:4px;margin-right:auto}
.n>.sp{letter-spacing:.08px}
.n1{padding-left:10px}.n1 .tw,.n2 .tw{margin-right:4px}
.n2{padding-left:20px}.n3{padding-left:41px}.n4{padding-left:30px}
.lk{margin-right:6px;margin-top:-3px}
.sel{background:#8b8b8b;color:#050505}

/* designer viewport */
.viewport{width:1202px;height:643px;position:relative;background:#2e2e2e;margin-right:4px;flex:none}
.hud{position:absolute;font-size:18.670px;line-height:25px;font-weight:700;color:rgba(160,160,160,.45);white-space:nowrap}
.zoom{left:26px;top:24px}
.pos{left:136px;top:24px;letter-spacing:.1px}
.info{left:26px;bottom:3px}
.info div:first-child,.info div:nth-child(2){letter-spacing:-.08px}
.info div:last-child{letter-spacing:.25px}
.dpi{right:11px;bottom:3px;display:flex;align-items:center;gap:9px}
.chips{position:absolute;left:745px;top:21px;display:flex;height:26px;color:#111;font-weight:700}
.chip{height:26px;border:1px solid #0a0a0a;border-radius:6px;background:#b9b9b9;display:flex;overflow:hidden}
.chip b{height:24px;display:flex;align-items:center;justify-content:center;position:relative}
.chip b+b{border-left:2px solid #111}
.chip .r{border:0;color:#444;font-size:14px}
.chip.or,.chip b.or{background:#c1780a}
.dim{background:#8a8a8a}
.m1{margin-left:1px}.m2{margin-left:2px}.m3{margin-left:3px}.m4{margin-left:4px}
.w23{width:22px}.w24{width:23px}.w45{width:46px}.w79{width:76px}.w73{width:71px}
.w79,.w73{font-size:11.500px;gap:2px;letter-spacing:-.1px}
.none{padding-bottom:5px}
.none em{position:absolute;bottom:4px;left:50%;margin-left:-2px;border:2px solid transparent;border-top-color:#111;border-bottom:0}
.tb{position:absolute;top:97px;font:700 21.600px/26px Roboto,sans-serif;color:#fff;white-space:nowrap}
.t1{left:200px}.t2{left:331px;color:#ff7387}.t3{left:462px}.t4{left:933px}
.rl{font:10.300px Roboto,sans-serif;fill:#9a9a9a;text-anchor:middle}
.tl{font:10.670px Roboto,sans-serif}

/* details panel */
.right{width:420px;flex:none}
.dtab{border-top:1px solid #b79a20}
.details{height:621px;padding-top:10px;font-size:11px;letter-spacing:.1px}
.name{display:flex;align-items:center;height:18px;padding-left:10px;font-size:12px}
.field{margin-left:5px;width:200px;height:18px;background:#d9d9d9;border-radius:3px;color:#111;padding:1px 5px}
.cb{width:14px;height:14px;margin-left:7px;border-radius:2px;background:#d9d9d9;display:flex;align-items:center;justify-content:center}
.name span{margin-left:4px}
.name u{margin:0 0 0 18px;letter-spacing:.3px}
.dsearch{display:flex;align-items:center;height:22px;margin:9px 0 0 4px;font-size:12px}
.dsearch .search{width:342px}
.gridbtn{width:26px;height:22px;margin-left:9px;background:linear-gradient(#d8d8d8,#a8a8a8);border:1px solid #eee;border-radius:2px;display:flex;align-items:center;justify-content:center}
.eyeb{margin:0 3px 0 4px}
.props{display:flex;height:562px;padding-top:1px;overflow:hidden}
.list{width:415px;flex:none;background:linear-gradient(90deg,transparent 142px,#2a2a2a 142px 143px,transparent 143px);overflow:hidden}
.row{display:flex;align-items:center;color:#c9c9c9}
.h22{height:22px}.h26{height:26px}.h24{height:24px}
.row label{width:142px;height:100%;display:flex;align-items:center;padding-left:18px;position:relative;flex:none}
.row label.in{padding-left:28px}
.row label>svg:last-child:not(.x1):not(.x2):not(.x0){margin-left:auto;margin-right:2px}
.x0,.x1,.x2{position:absolute}
.x0{left:5px}.x1{left:6px;margin-top:-3px}.x2{left:17px;margin-top:-3px}
.num{width:105px;height:17px;margin-left:4px;background:#d9d9d9;border-radius:3px;color:#222;display:flex;align-items:center;padding:0 5px 0 4px}
.num svg{margin-left:auto}
.num.xy{width:116px;padding-left:3px}
.num.y{width:115px;margin-left:3px}
.num.wide{width:234px;height:19px;padding-left:5px}
.rs{margin-left:8px}.rs.near{margin-left:12px}.rs.far{margin-left:117px}
.cb.off{margin-left:5px;background:#adadad}
.cat{height:31px;background:linear-gradient(90deg,transparent 142px,#262626 142px 143px,transparent 143px),#2f2f2f}
.cat label{font-size:12.600px;font-weight:700;padding-left:16px;color:#dedede;text-shadow:1px 1px #111}
.drop{width:162px;height:21px;margin-left:4px;background:#5a5a5a;border-radius:3px;color:#eee;display:flex;align-items:center;justify-content:space-between;padding:0 4px 1px 2px;font-size:11px;text-shadow:1px 1px #111}
.back{margin:0 11px 0 10px}
.find{color:#b5b5b5}
.swatch{width:234px;height:12px;background:#fff;margin-left:4px}
.dtrack{margin-left:-11px;padding-top:18px}
.dtrack .thumb{height:206px}

/* bottom docks */
.bottom{height:281px;flex:none;display:flex;padding:5px 2px 0 1px;border-bottom:2px solid #222}
.anim{width:287px;margin-right:5px}
.anim .panel{height:252px;display:flex;padding:6px 0 0 6px}
.addanim{width:79px;height:21px;background:#4aa04e;border:1px solid #3b7d3f;border-radius:2px;display:flex;align-items:center;gap:3px;padding-left:3px;font-weight:700;color:#f4f4f4;text-shadow:1px 1px #1a3a1c}
.anim .search{width:192px;margin-left:2px;margin-top:2px}
.timeline{width:1624px}
.tabs{display:flex}
.tabs .tab.off{background:#2f2f2f;margin-left:1px}
.tbody{height:252px;background:#3d3d3d}
.ttools{height:31px;background:#414141;display:flex;align-items:center;position:relative;color:#8e8e8e}
.ttools s{width:2px;height:26px;background:#333}
.i1{margin-left:14px}.i2{margin-left:3px}.i3{margin-left:22px}.i4{margin-left:6px}.i5{margin-left:20px}.i6{margin-left:7px}.i7{margin-left:9px}.i8{margin-left:9px}.i9{margin-left:5px}.i10{margin-left:16px}.i11{margin-left:11px}
.magnet{width:32px;height:28px;margin-left:5px;background:#8e7b70;border-radius:2px;display:flex;align-items:center;justify-content:center}
.i12{margin-left:12px}.i13{margin-left:9px}
.fps{margin-left:6px;display:flex;align-items:center;gap:2px}
.i14{margin-left:7px}.i15{margin-left:10px}
.lock{margin-left:auto;margin-right:9px;margin-bottom:12px}
.tmain{display:flex;height:221px}
.outliner{width:493px;display:flex;flex-direction:column;justify-content:space-between}
.otop{height:26px;width:491px;background:#414141;display:flex;align-items:center;padding-left:8px}
.trk{width:65px;height:21px;background:#758470;border:1px solid #7f927c;display:flex;align-items:center;padding:0 3px;gap:5px;color:#a9aea7;text-shadow:1px 1px #333;font-size:12.500px}
.trk svg:last-child{margin-left:-1px}
.flt{display:flex;align-items:center;gap:2px;margin-left:6px;color:#a5a5a5;text-shadow:1px 1px #222}
.dimmed{width:298px;background:#7b7b7b;color:#555;margin-left:auto}
.dimmed svg{color:#222}
.zero{margin:0 14px 0 9px;color:#8e7b70}
.obot{height:34px;background:#414141;padding:7px 0 0 112px}
.trackarea{position:relative;width:1131px}
.noanim{position:absolute;left:0;width:638px;text-align:center;top:81px;font-size:24px;line-height:28px;color:#dcdcdc;text-shadow:2px 2px #111;letter-spacing:.17px}
.watermark{position:absolute;left:844px;top:125px;color:#929292;font-family:"Noto Sans","Noto Sans CJK SC",sans-serif;white-space:nowrap}
.w1{font-size:20.500px;line-height:28px}
.w2{font-size:14.900px;line-height:20px}

/* taskbar */
.taskbar{height:40px;flex:none;display:flex;background:linear-gradient(90deg,#cfe4ec,#cfe5ee 40%,#d5dcea 75%,#d3daea);color:#111;font-family:"Noto Sans","Noto Sans CJK SC",sans-serif}
.start{width:48px;display:flex;align-items:center;justify-content:center}
.tsearch{width:344px;height:39px;margin-top:1px;background:#fff;border:1px solid #b9c4c9;border-bottom:0;display:flex;align-items:center;gap:11px;padding-left:11px;font-size:14px;color:#333}
.apps{display:flex;margin-left:1px}
.app{width:49px;height:40px;display:flex;align-items:center;justify-content:center;position:relative}
.app:not(.n)::after{content:"";position:absolute;left:4px;right:4px;bottom:0;height:2px;background:#0b78d4}
.app.on{background:#ebf4f7}
.app.on::after{left:0;right:0}
.epic{font:700 9px Roboto,sans-serif;fill:#fff;text-anchor:middle}
.games{font:700 4.500px Roboto,sans-serif;fill:#fff;text-anchor:middle}
.hot{font:700 11px "Noto Sans CJK SC",sans-serif;fill:#fff;text-anchor:middle}
.tray{margin-left:auto;display:flex;align-items:center;padding-right:24px}
.tray svg:nth-child(1){margin-right:11px}.tray svg:nth-child(2){margin-right:10px}.tray svg:nth-child(3){margin-right:7px}
.ime{font-size:16px;margin:0 8px 0 4px}
.clock{text-align:center;font-size:12px;line-height:18px;width:64px;margin-right:16px}

/* markup drawn over the editor */
.note-box{position:absolute;left:3px;top:481px;width:295px;height:159px;border:3px solid #ff2015;border-radius:2px}
.note{position:absolute;left:508px;top:412px;width:850px;font:21px/27.500px "Noto Sans","Noto Sans CJK SC",sans-serif;font-weight:400;letter-spacing:.16px;color:#ff2010}
.note-arrow{position:absolute;left:1360px;top:416px}
```

FILE: draw.js
```js
const NS = 'http://www.w3.org/2000/svg';

function add(parent, name, attrs, text) {
  const el = document.createElementNS(NS, name);
  for (const k in attrs) el.setAttribute(k, attrs[k]);
  if (text !== undefined) el.textContent = text;
  parent.appendChild(el);
  return el;
}
const box = (p, x, y, w, h, fill) => add(p, 'rect', { x, y, width: w, height: h, fill });

// Designer canvas: rulers, grid and the selected widget's outline
const c = document.getElementById('canvas');
const ORIGIN_X = 478, ORIGIN_Y = 211, CELL = 10.8, UNIT = 0.675;
box(c, 292, 116, 1202, 643, '#3c3c3c');
box(c, 294, 118, 1198, 639, '#2f2f2f');
box(c, 312, 136, 1180, 621, '#262626');
for (const major of [false, true]) {
  for (let i = -16; i < 95; i++) {
    if ((i % 10 === 0) !== major) continue;
    const fill = i === 0 ? '#000' : major ? '#161616' : '#353535';
    const x = Math.round(ORIGIN_X + i * CELL), y = Math.round(ORIGIN_Y + i * CELL);
    if (x > 312 && x < 1492) box(c, x, 136, 1, 621, fill);
    if (y > 136 && y < 757) box(c, 312, y, 1180, 1, fill);
  }
}
box(c, 311, 135, 1181, 1, '#6a6a6a');
box(c, 311, 135, 1, 622, '#6a6a6a');
for (let i = -25; i <= 151; i++) {
  const x = Math.round(ORIGIN_X + i * 10 * UNIT), y = Math.round(ORIGIN_Y + 1 + i * 10 * UNIT);
  const len = i % 10 === 0 ? 7 : i % 5 === 0 ? 5 : 2;
  if (x > 312 && x < 1492) box(c, x, 135 - len, 1, len, '#6a6a6a');
  if (y > 136 && y < 757) box(c, 311 - len, y, len, 1, '#6a6a6a');
}
for (let v = -200; v <= 1400; v += 100) {
  add(c, 'text', { x: ORIGIN_X + 0.5 + v * UNIT, y: 129.5, class: 'rl' }, Math.abs(v));
}
add(c, 'text', { x: 1486, y: 129.5, class: 'rl' }, '15');
for (let v = -100; v <= 800; v += 100) {
  const digits = String(Math.abs(v)).split('');
  const mid = ORIGIN_Y + 1 + v * UNIT;
  digits.forEach((d, i) => {
    const y = mid + (i - (digits.length - 1) / 2) * 11 + 4;
    if (y > 140 && y < 758) add(c, 'text', { x: 300.5, y, class: 'rl' }, d);
  });
}
box(c, 1465, 118, 1, 18, '#1fd02a');
box(c, 294, 475, 18, 1, '#1fd02a');
add(c, 'path', { d: 'M292 116H302L292 126Z', fill: '#a5831d' });

add(c, 'rect', { x: 477, y: 210, width: 868, height: 490, fill: 'none', stroke: '#00f800', 'stroke-width': 2 });
add(c, 'rect', { x: 479.5, y: 212.5, width: 863, height: 485, fill: 'none', stroke: '#111' });
add(c, 'rect', { x: 479.5, y: 212.5, width: 863, height: 485, fill: 'none', stroke: '#eee', 'stroke-dasharray': '4 4' });
for (const d of [
  'M455.500 188.500H466L478 207 473 211 455.500 198.500Z',
  'M1366.500 188.500H1356L1344 207 1349 211 1366.500 198.500Z',
  'M455.500 721H464.500L477.500 704 472.500 702 455.500 713.500Z',
  'M1366.500 721H1356L1345 705 1349 701.500 1366.500 712Z'
]) add(c, 'path', { d, fill: '#fff', stroke: '#0a0a0a', 'stroke-width': 1.3 });
for (const [x, y] of [[473, 206], [1343, 206], [473, 698], [1343, 698]]) box(c, x, y, 6, 6, '#fff');
for (const [x, y] of [[910, 206], [473, 454], [1347, 454], [910, 702]]) {
  add(c, 'circle', { cx: x, cy: y, r: 3.4, fill: '#fff', stroke: '#111' });
}

// Timeline: time rulers at the top and bottom, playback range from 0 to 5 s
const t = document.getElementById('tracks');
const START = 879, END = 1822, STEP = (END - START) / 20;
box(t, 786, 817, 1131, 221, '#414141');
box(t, 786, 817, 1131, 26, '#343434');
box(t, 786, 1004, 1131, 33, '#343434');
for (const [x, w] of [[786, START - 786], [END, 1917 - END]]) {
  box(t, x, 817, w, 26, '#242424');
  box(t, x, 843, w, 160, '#2d2d2d');
  box(t, x, 1003, w, 1, '#454545');
  box(t, x, 1004, w, 33, '#242424');
}
for (let i = -2; i <= 21; i++) {
  const x = Math.round(START + i * STEP), out = i < 0 || i >= 20;
  if (i > -2) {
    box(t, x, 843, 1, 161, out ? '#262626' : '#383838');
    if (i !== 0) {
      box(t, x, 834, 1, 9, out ? '#777' : '#a5a5a5');
      box(t, x, 1004, 1, 9, out ? '#777' : '#a5a5a5');
    }
  }
  if (i === 0) continue;
  const label = (i / 4).toFixed(2), fill = out ? '#4f4f4f' : '#6c6c6c';
  add(t, 'text', { x: x + 6, y: 841, class: 'tl', fill }, label);
  add(t, 'text', { x: x + 6, y: 1015, class: 'tl', fill }, label);
}
add(t, 'path', { d: 'M874 818H886V837L880 842 874 837Z', fill: '#6f5d5a' });
add(t, 'path', { d: 'M874 1036H886V1011L880 1006 874 1011Z', fill: '#6f5d5a' });
box(t, START, 843, 1, 161, '#7a7a7a');
box(t, START + 1, 817, 1, 220, '#2f7a36');
add(t, 'text', { x: 889, y: 828, 'font-size': 12, fill: '#b8b8b8' }, '0.00');
add(t, 'text', { x: 889, y: 1034, 'font-size': 12, fill: '#b8b8b8' }, '0.00');
box(t, END - 1, 817, 1, 220, '#8a1c1c');
add(t, 'path', { d: 'M1816 817H1822V823ZM1822 1037H1816L1822 1031Z', fill: '#8a1c1c' });
```
